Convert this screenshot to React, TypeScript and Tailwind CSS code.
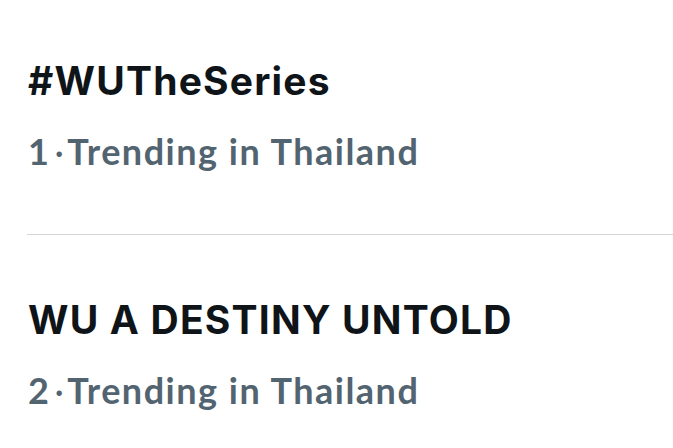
import React from 'react';

const trends = [
  { rank: 1, title: '#WUTheSeries' },
  { rank: 2, title: 'WU A DESTINY UNTOLD' },
];

function Trend({ rank, title }: { rank: number; title: string }) {
  return (
    <div className="pl-[28px]">
      <div className="text-[39px] leading-[48px] font-bold text-[#0f1419] tracking-[1.2px]" style={{ fontFamily: 'Inter, "Noto Sans", sans-serif' }}>
        {title}
      </div>
      <div className="mt-[25px] flex text-[36px] leading-[42px] font-bold text-[#536471] tracking-[1.5px]" style={{ fontFamily: 'Lato, "Noto Sans", sans-serif' }}>
        <span>{rank}</span>
        <span className="ml-[4px] mr-[2px] font-normal">·</span>
        <span className="whitespace-pre">Trending in Thailand</span>
      </div>
    </div>
  );
}

export default function App() {
  return (
    <div className="w-[673px] h-[448px] bg-white overflow-hidden pt-[57px]">
      <Trend {...trends[0]} />
      <div className="ml-[27px] mt-[62px] h-px bg-[#d4d4d4]" />
      <div className="pt-[61px]">
        <Trend {...trends[1]} />
      </div>
    </div>
  );
}
